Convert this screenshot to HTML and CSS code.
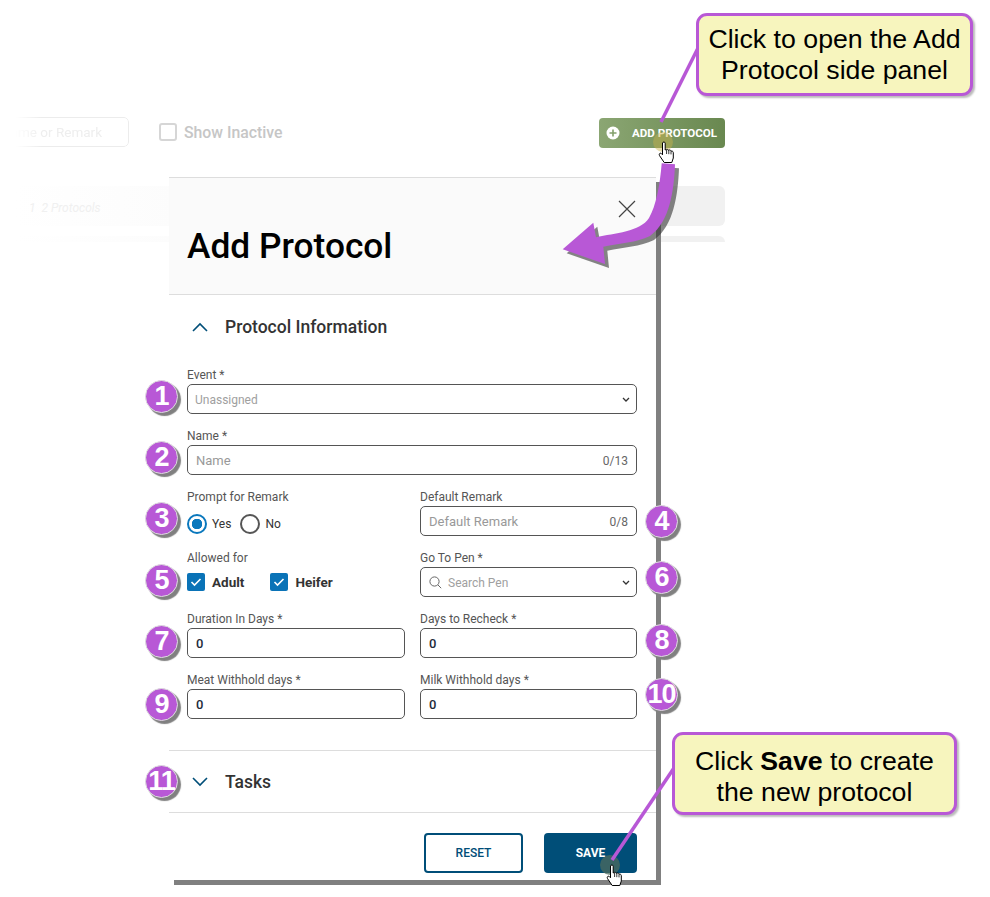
FILE: index.html
```html
<!DOCTYPE html>
<html lang="en">

<head>
  <meta charset="UTF-8">
  <title>Add Protocol</title>
  <link rel="stylesheet" href="styles.css">
</head>

<body>
  <div class="page">

    <!-- faded page behind the side panel -->
    <div class="backdrop">
      <div class="toolbar">
        <div class="search-box"><span>Name or Remark</span></div>
        <label class="inactive"><span class="inactive-box"></span>Show Inactive</label>
        <button class="add-button">
          <svg width="14" height="14" viewBox="0 0 14 14">
            <circle cx="7" cy="7" r="6.5" fill="#fff" />
            <path d="M7 3.5v7M3.5 7h7" stroke="#83a06c" stroke-width="1.6" />
          </svg>
          ADD PROTOCOL
        </button>
      </div>
      <div class="count-bar"><em>1 &nbsp;2 Protocols</em></div>
      <div class="count-bar-2"></div>
    </div>

    <!-- side panel -->
    <div class="panel">
      <div class="panel-header">
        <svg class="close-icon" width="20" height="20" viewBox="0 0 20 20">
          <path d="M2 2l16 16M18 2L2 18" stroke="#444" stroke-width="1.2" fill="none" />
        </svg>
        <h1>Add Protocol</h1>
      </div>

      <div class="section-title section-open">
        <svg width="18" height="10" viewBox="0 0 18 10">
          <path d="M2 9l7-7 7 7" stroke="#004e78" stroke-width="1.6" fill="none" />
        </svg>
        Protocol Information
      </div>

      <div class="form-grid">
        <div class="form-group wide">
          <label>Event *</label>
          <div class="field"><span class="placeholder small">Unassigned</span>
            <svg class="caret" width="8" height="5" viewBox="0 0 8 5"><path d="M1 1l3 3 3-3" stroke="#333" stroke-width="1.3" fill="none" /></svg>
          </div>
        </div>

        <div class="form-group wide">
          <label>Name *</label>
          <div class="field"><span class="placeholder">Name</span><span class="counter">0/13</span></div>
        </div>

        <div class="form-group">
          <label>Prompt for Remark</label>
          <div class="choices choices-radio">
            <span class="radio radio-on"></span><span class="radio-label">Yes</span>
            <span class="radio"></span><span class="radio-label">No</span>
          </div>
        </div>

        <div class="form-group">
          <label>Default Remark</label>
          <div class="field"><span class="placeholder">Default Remark</span><span class="counter">0/8</span></div>
        </div>

        <div class="form-group">
          <label>Allowed for</label>
          <div class="choices">
            <span class="check"><svg width="12" height="10" viewBox="0 0 12 10"><path d="M1.5 5l3 3 6-6" stroke="#fff" stroke-width="1.6" fill="none" /></svg></span>
            <span class="check-label">Adult</span>
            <span class="check"><svg width="12" height="10" viewBox="0 0 12 10"><path d="M1.5 5l3 3 6-6" stroke="#fff" stroke-width="1.6" fill="none" /></svg></span>
            <span class="check-label">Heifer</span>
          </div>
        </div>

        <div class="form-group">
          <label>Go To Pen *</label>
          <div class="field">
            <svg class="search-icon" width="13" height="13" viewBox="0 0 13 13"><circle cx="5.5" cy="5.5" r="4.6" stroke="#666" fill="none" /><path d="M9 9l3.2 3.2" stroke="#666" /></svg>
            <span class="placeholder small">Search Pen</span>
            <svg class="caret" width="8" height="5" viewBox="0 0 8 5"><path d="M1 1l3 3 3-3" stroke="#333" stroke-width="1.3" fill="none" /></svg>
          </div>
        </div>

        <div class="form-group">
          <label>Duration In Days *</label>
          <div class="field"><span class="value">0</span></div>
        </div>

        <div class="form-group">
          <label>Days to Recheck *</label>
          <div class="field"><span class="value">0</span></div>
        </div>

        <div class="form-group">
          <label>Meat Withhold days *</label>
          <div class="field"><span class="value">0</span></div>
        </div>

        <div class="form-group">
          <label>Milk Withhold days *</label>
          <div class="field"><span class="value">0</span></div>
        </div>
      </div>

      <div class="section-title section-closed">
        <svg width="18" height="10" viewBox="0 0 18 10">
          <path d="M2 1l7 7 7-7" stroke="#004e78" stroke-width="1.6" fill="none" />
        </svg>
        Tasks
      </div>

      <div class="panel-footer">
        <button class="btn-reset">RESET</button>
        <button class="btn-save">SAVE</button>
      </div>
    </div>

    <!-- annotation layer -->
    <svg class="overlay" width="990" height="897" viewBox="0 0 990 897">
      <defs>
        <g id="hand">
          <path d="M4.5 2C5 .6 7 .6 7.2 2.2V9L8.4 8.4C9.4 8 10.2 8.6 10.3 9.4L11.3 9C12.3 8.8 13 9.5 13 10.3L13.7 10.1C14.8 10 15.3 11 15.3 12V17L13.8 21.5H6.2L1.5 14.6C.7 13.2 1.8 11.6 3.2 12.4L4.5 13.8Z" fill="#fff" stroke="#000" stroke-width="1" />
          <path d="M8.6 9v4M10.8 9.6v3.6M13 10.4v3" stroke="#000" stroke-width=".8" />
        </g>
        <path id="arrow" d="M661.7 163.3L675 164.3C674 190 670 222 650 236C636 243 620 243 603.3 246.7L605 264L562.7 249.3L593.3 222.7L596 237.3C615 233 640 232 649 218C656 206 660 185 661.7 163.3Z" />
      </defs>

      <circle cx="663" cy="142" r="10" fill="#c9b14a" opacity=".45" />
      <line x1="698" y1="48" x2="661" y2="122" stroke="#b858d6" stroke-width="3.5" />
      <use href="#hand" x="658" y="141" />

      <use href="#arrow" fill="#333" opacity=".6" transform="translate(4 4)" />
      <use href="#arrow" fill="#b858d6" />

      <circle cx="610" cy="865" r="10" fill="#4d6b5e" opacity=".75" />
      <line x1="674" y1="768" x2="612" y2="860" stroke="#b858d6" stroke-width="3.5" />
      <use href="#hand" x="606" y="864" />
    </svg>

    <div class="callout callout-open"><p>Click to open the Add<br>Protocol side panel</p></div>
    <div class="callout callout-save"><p>Click <strong>Save</strong> to create<br>the new protocol</p></div>

    <span class="badge badge-1">1</span>
    <span class="badge badge-2">2</span>
    <span class="badge badge-3">3</span>
    <span class="badge badge-4">4</span>
    <span class="badge badge-5">5</span>
    <span class="badge badge-6">6</span>
    <span class="badge badge-7">7</span>
    <span class="badge badge-8">8</span>
    <span class="badge badge-9">9</span>
    <span class="badge badge-10">10</span>
    <span class="badge badge-11">11</span>
  </div>
</body>

</html>
```

FILE: styles.css
```css
* {
  margin: 0;
  padding: 0;
  box-sizing: border-box;
}

body {
  font-family: Roboto, 'Noto Sans', sans-serif;
  background: white;
  color: #333;
}

.page {
  position: relative;
  width: 990px;
  height: 897px;
  overflow: hidden;
}

/* faded background */
.backdrop {
  width: 725px;
  padding-top: 116px;
}

.toolbar {
  display: flex;
  align-items: center;
  height: 32px;
}

.search-box {
  display: flex;
  justify-content: flex-end;
  width: 129px;
  height: 30px;
  padding-right: 26px;
  border: 1px solid #ececec;
  border-radius: 5px;
  color: #eeeeee;
  font-size: 13.5px;
  line-height: 28px;
  white-space: nowrap;
  -webkit-mask-image: linear-gradient(90deg, transparent 12%, #000 32%);
  mask-image: linear-gradient(90deg, transparent 12%, #000 32%);
}

.inactive {
  display: flex;
  align-items: center;
  gap: 7px;
  margin-left: 30px;
  color: #c6c6c6;
  font-size: 15.8px;
  font-weight: 500;
}

.inactive-box {
  width: 18px;
  height: 18px;
  border: 2px solid #d6d6d6;
  border-radius: 3px;
}

.add-button {
  display: flex;
  align-items: center;
  gap: 12px;
  width: 126px;
  height: 30px;
  margin-left: auto;
  margin-top: 2px;
  padding-left: 7px;
  border: none;
  border-radius: 4px;
  background: linear-gradient(90deg, #8ba673, #698850);
  color: white;
  font-family: inherit;
  font-size: 11.6px;
  font-weight: 700;
  white-space: nowrap;
}

.count-bar {
  height: 40px;
  margin: 38px 0 0 15px;
  padding-left: 14px;
  border-radius: 6px;
  background: linear-gradient(90deg, #fff, #fbfbfb 30%, #f1f1f1 85%);
  color: #f0f0f0;
  font-size: 12px;
  line-height: 44px;
}

.count-bar-2 {
  height: 6px;
  margin: 10px 0 0 15px;
  border-radius: 6px 6px 0 0;
  background: linear-gradient(90deg, #fff, #fbfbfb 30%, #f1f1f1 85%);
}

/* side panel */
.panel {
  position: absolute;
  top: 177px;
  left: 169px;
  display: flex;
  flex-direction: column;
  width: 487px;
  height: 703px;
  background: white;
  box-shadow: 5px 5px 0 #808080;
}

.panel-header {
  position: relative;
  height: 118px;
  padding: 48px 0 0 18px;
  border-top: 1px solid #ddd;
  border-bottom: 1px solid #ddd;
  background: #fafafa;
}

.panel-header h1 {
  color: #000;
  font-size: 35.3px;
  font-weight: 500;
  line-height: 40px;
}

.close-icon {
  position: absolute;
  top: 21px;
  right: 19px;
}

.section-title {
  display: flex;
  align-items: center;
  gap: 16px;
  padding-left: 22px;
  font-size: 17.5px;
  font-weight: 500;
  color: #333;
}

.section-open {
  height: 62px;
  padding-top: 2px;
}

.section-closed {
  height: 63px;
  margin-top: 31px;
  border-top: 1px solid #ddd;
  border-bottom: 1px solid #ddd;
}

.form-grid {
  display: grid;
  grid-template-columns: 218px 217px;
  column-gap: 15px;
  row-gap: 11px;
  padding: 7px 19px 0 18px;
}

.form-group.wide {
  grid-column: 1 / 3;
}

.form-group label {
  display: block;
  height: 20px;
  color: #555;
  font-size: 12px;
  line-height: 22px;
  white-space: nowrap;
}

.field {
  display: flex;
  align-items: center;
  height: 30px;
  padding: 0 8px;
  border: 1px solid #555;
  border-radius: 5px;
  background: white;
}

.placeholder {
  color: #999;
  font-size: 13px;
}

.placeholder.small {
  margin-top: 2px;
  color: #a0a0a0;
  font-size: 12px;
}

.field > .placeholder.small:first-child {
  margin-left: -1px;
}

.counter {
  margin-left: auto;
  margin-top: 2px;
  color: #666;
  font-size: 12px;
}

.value {
  color: #1d2b3a;
  font-size: 13px;
  font-weight: 500;
}

.caret {
  margin-left: auto;
  margin-right: -2px;
}

.search-icon {
  margin-right: 6px;
}

.choices {
  display: flex;
  align-items: center;
  height: 30px;
}

.choices-radio {
  padding-top: 6px;
}

.radio {
  width: 20px;
  height: 20px;
  border: 2px solid #555;
  border-radius: 50%;
}

.radio-on {
  border-color: #0a78bd;
  background: radial-gradient(circle, #0a78bd 0 5px, white 5.5px);
}

.radio-label {
  margin: 0 9px 0 5px;
  font-size: 12px;
  color: #333;
}

.check {
  display: flex;
  align-items: center;
  justify-content: center;
  width: 18px;
  height: 18px;
  border-radius: 2px;
  background: #0a73b7;
}

.check-label {
  margin: 0 26px 0 7px;
  font-size: 13.5px;
  font-weight: 700;
  color: #333;
}

.panel-footer {
  display: flex;
  justify-content: flex-end;
  gap: 21px;
  padding: 20px 19px 0 0;
}

.btn-reset,
.btn-save {
  height: 40px;
  border-radius: 4px;
  font-family: inherit;
  font-size: 12px;
  font-weight: 500;
}

.btn-reset {
  width: 99px;
  border: 2px solid #004e78;
  background: white;
  color: #004e78;
}

.btn-save {
  width: 93px;
  border: none;
  background: #004e78;
  color: white;
  font-weight: 700;
}

/* annotations */
.overlay {
  position: absolute;
  top: 0;
  left: 0;
}

.callout {
  position: absolute;
  display: flex;
  align-items: center;
  justify-content: center;
  height: 83px;
  border: 3.5px solid #b858d6;
  border-radius: 11px;
  background: #f7f5be;
  box-shadow: 2px 2px 2px #bbb;
  color: black;
  font-family: 'Liberation Sans', Arial, sans-serif;
  font-size: 26.7px;
  line-height: 31px;
  text-align: center;
}

.callout-open {
  top: 13px;
  left: 696px;
  width: 277px;
}

.callout-save {
  top: 732px;
  left: 672px;
  width: 285px;
  padding-top: 7px;
}

.badge {
  position: absolute;
  width: 33px;
  height: 33px;
  border: 1px solid #ddd;
  border-radius: 50%;
  background: #b858d6;
  box-shadow: 3px 3px 1px #808080;
  color: white;
  font-family: 'Liberation Sans', Arial, sans-serif;
  font-size: 27px;
  font-weight: 700;
  line-height: 30px;
  letter-spacing: -1px;
  text-align: center;
}

.badge-1 { top: 380px; left: 145px; }
.badge-2 { top: 441px; left: 145px; }
.badge-3 { top: 502px; left: 145px; }
.badge-4 { top: 505px; left: 645px; }
.badge-5 { top: 564px; left: 145px; }
.badge-6 { top: 561px; left: 645px; }
.badge-7 { top: 625px; left: 145px; }
.badge-8 { top: 624px; left: 645px; }
.badge-9 { top: 688px; left: 145px; }
.badge-10 { top: 678px; left: 645px; }
.badge-11 { top: 765px; left: 145px; }
```
